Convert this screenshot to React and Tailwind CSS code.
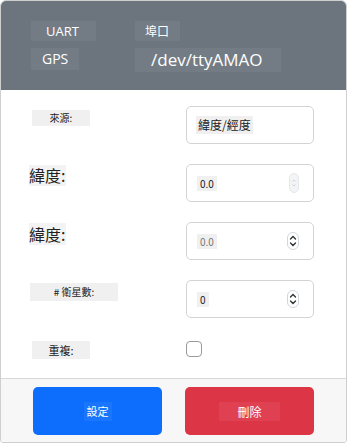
import React from "react";

const cjk = { fontFamily: '"Noto Sans CJK TC", "Noto Sans", sans-serif' };
const latin = { fontFamily: '"Open Sans", "Noto Sans CJK TC", sans-serif' };

function Spinner({ faint }) {
    if (faint) {
        return (
            <div className="flex h-[20px] w-[10px] flex-col items-center justify-center rounded-full border border-gray-200 bg-gray-100">
                <svg width="6" height="12" viewBox="0 0 6 12" fill="none" stroke="#c8c8c8" strokeWidth="0.8">
                    <path d="M1.5 4.5 L3 3 L4.5 4.5" />
                    <path d="M1.5 7.5 L3 9 L4.5 7.5" />
                </svg>
            </div>
        );
    }
    return (
        <div className="flex h-[18px] w-[12px] flex-col items-center justify-center rounded-full border border-gray-300">
            <svg width="10" height="16" viewBox="0 0 10 16" fill="none" stroke="#333" strokeWidth="1.4" strokeLinecap="round">
                <path d="M2.5 6 L5 3.5 L7.5 6" />
                <path d="M2.5 10 L5 12.5 L7.5 10" />
            </svg>
        </div>
    );
}

function NumberBox({ value, faint, dim }) {
    return (
        <div className="flex h-[38px] w-[128px] items-center justify-between rounded-[5px] border border-[#d4d4d4] bg-white pl-[10px] pr-[14px]">
            <span
                className={`bg-[#f0f0f0] px-[3px] text-[10px] leading-[15px] ${dim ? "text-[#777]" : "text-[#222]"}`}
                style={cjk}
            >
                {value}
            </span>
            <Spinner faint={faint} />
        </div>
    );
}

export default function App() {
    return (
        <div className="h-[444px] w-[348px] bg-white">
            <div className="flex h-[443px] w-[347px] flex-col overflow-hidden rounded-t-[6px] rounded-b-[3px] border border-[#cfcfcf]">
                {/* header */}
                <div className="h-[89px] shrink-0 bg-[#6c757d] pl-[30px] pt-[20px] text-white" style={latin}>
                    <div className="flex items-start">
                        <div className="flex w-[104px]">
                            <span className="h-[20px] w-[65px] bg-[#737c84] pl-[15px] text-[13px] leading-[20px]">UART</span>
                        </div>
                        <span className="h-[20px] w-[45px] bg-[#737c84] pl-[10px] text-[12px] leading-[20px]" style={cjk}>埠口</span>
                    </div>
                    <div className="mt-[7px] flex items-start">
                        <div className="flex w-[104px]">
                            <span className="h-[22px] w-[48px] bg-[#737c84] pl-[11px] text-[14px] leading-[22px]">GPS</span>
                        </div>
                        <span className="h-[24px] w-[146px] bg-[#737c84] pl-[16px] text-[17px] leading-[24px]">/dev/ttyAMAO</span>
                    </div>
                </div>

                {/* body */}
                <div className="flex flex-1 flex-col pt-[16px] text-[#222]" style={cjk}>
                    <div className="flex items-start">
                        <div className="flex w-[185px] pl-[31px] pt-[4px]">
                            <span className="h-[16px] w-[58px] bg-[#f0f0f0] text-center text-[10px] leading-[16px]">來源:</span>
                        </div>
                        <div className="flex h-[38px] w-[128px] items-center rounded-[5px] border border-[#d4d4d4] pl-[9px]">
                            <span className="bg-[#f0f0f0] px-[2px] text-[12px] leading-[18px]">緯度/經度</span>
                        </div>
                    </div>

                    <div className="mt-[20px] flex items-start">
                        <div className="flex w-[185px] pl-[28px] pt-[1px]">
                            <span className="h-[21px] bg-[#f3f3f3] pr-[1px] text-[16px] leading-[21px]">緯度:</span>
                        </div>
                        <NumberBox value="0.0" faint />
                    </div>

                    <div className="mt-[20px] flex items-start">
                        <div className="flex w-[185px] pl-[28px] pt-[1px]">
                            <span className="h-[22px] bg-[#f3f3f3] pr-[1px] text-[16px] leading-[22px]">緯度:</span>
                        </div>
                        <NumberBox value="0.0" dim />
                    </div>

                    <div className="mt-[20px] flex items-start">
                        <div className="flex w-[185px] pl-[29px] pt-[3px]">
                            <span className="h-[18px] w-[88px] bg-[#f0f0f0] text-center text-[10px] leading-[18px]"># 衛星數:</span>
                        </div>
                        <NumberBox value="0" />
                    </div>

                    <div className="mt-[23px] flex items-start">
                        <div className="flex w-[185px] pl-[31px]">
                            <span className="h-[18px] w-[58px] bg-[#f0f0f0] text-center text-[11px] leading-[18px]">重複:</span>
                        </div>
                        <div className="h-[16px] w-[16px] rounded-[4px] border border-[#999] bg-white"></div>
                    </div>
                </div>

                {/* footer */}
                <div className="flex h-[64px] shrink-0 items-start gap-[23px] border-t border-[#d8d8d8] bg-[#f7f7f7] pl-[32px] pt-[8px]" style={cjk}>
                    <button className="flex h-[48px] w-[129px] items-center justify-center rounded-[5px] bg-[#0d6efd] text-[11px] text-white">
                        <span className="bg-[#1a76fd] px-[3px] leading-[19px]">設定</span>
                    </button>
                    <button className="flex h-[48px] w-[129px] items-center justify-center rounded-[5px] bg-[#dc3545] text-[12px] text-white">
                        <span className="bg-[#df4152] px-[18px] leading-[19px]">刪除</span>
                    </button>
                </div>
            </div>
        </div>
    );
}
